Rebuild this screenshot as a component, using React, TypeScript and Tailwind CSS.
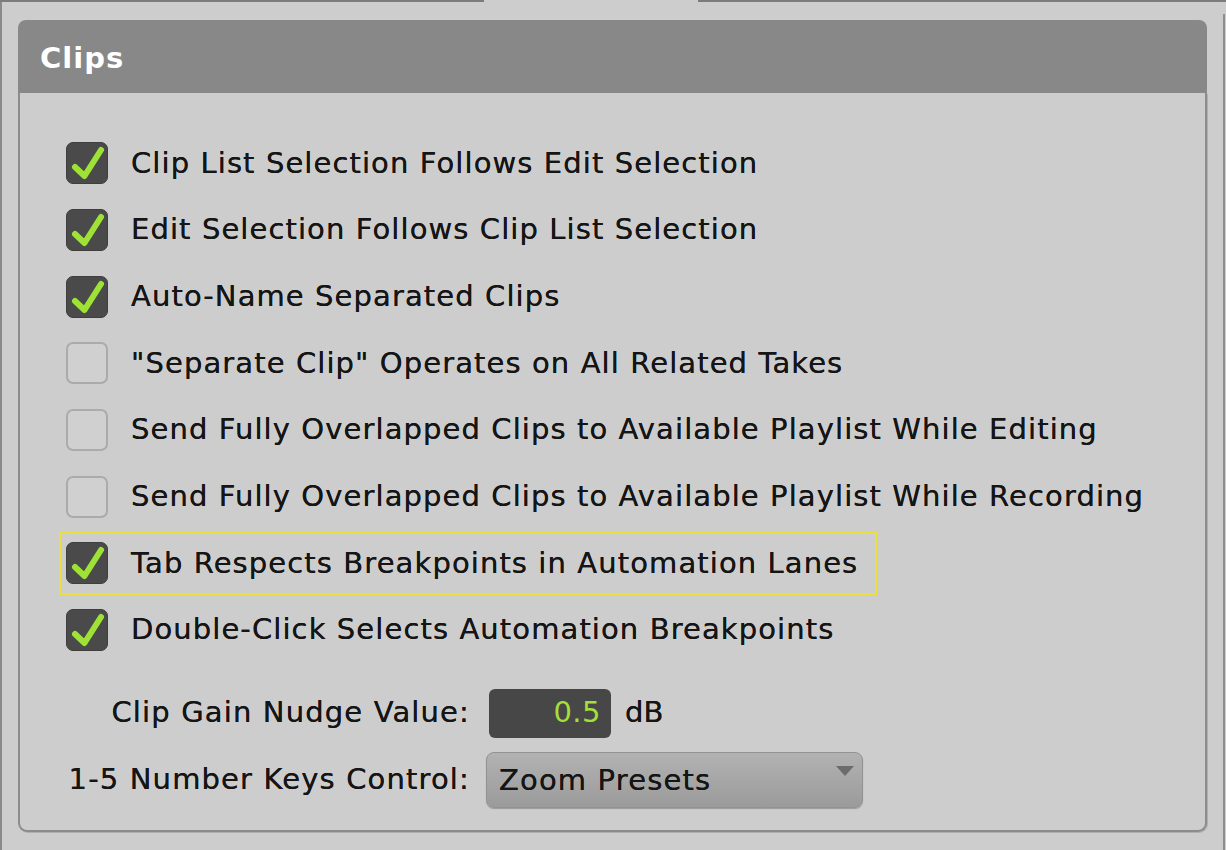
import React from "react";

const rows: { label: string; checked: boolean; highlight?: boolean }[] = [
  { label: "Clip List Selection Follows Edit Selection", checked: true },
  { label: "Edit Selection Follows Clip List Selection", checked: true },
  { label: "Auto-Name Separated Clips", checked: true },
  { label: "\"Separate Clip\" Operates on All Related Takes", checked: false },
  { label: "Send Fully Overlapped Clips to Available Playlist While Editing", checked: false },
  { label: "Send Fully Overlapped Clips to Available Playlist While Recording", checked: false },
  { label: "Tab Respects Breakpoints in Automation Lanes", checked: true, highlight: true },
  { label: "Double-Click Selects Automation Breakpoints", checked: true },
];

function Check({ checked }: { checked: boolean }) {
  if (!checked) {
    return <div className="w-[42px] h-[42px] shrink-0 rounded-[7px] border-2 border-[#ababab] bg-[#d0d0d0]" />;
  }
  return (
    <div className="w-[42px] h-[42px] shrink-0 rounded-[7px] bg-[#4a4a4a] border border-[#3e3e3e] relative">
      <svg className="absolute left-0 top-0" width="42" height="42" viewBox="0 0 42 42">
        <polyline
          points="8,24 17.5,33 34,7"
          fill="none"
          stroke="#9fe236"
          strokeWidth="6"
          strokeLinecap="round"
          strokeLinejoin="round"
        />
      </svg>
    </div>
  );
}

export default function App() {
  const font = { fontFamily: '"DejaVu Sans", "Liberation Sans", sans-serif' };
  return (
    <div className="w-[1226px] h-[850px] bg-[#cdcdcd] overflow-hidden flex flex-col" style={font}>
      <div className="flex h-[2px] shrink-0">
        <div className="w-[484px] bg-[#7c7c7c]" />
        <div className="w-[214px]" />
        <div className="flex-1 bg-[#7c7c7c]" />
      </div>
      <div className="flex flex-1">
        <div className="w-[2px] bg-[#8a8a8a] shrink-0" />
        <div className="pl-[16px] pt-[18px]">
          <div className="w-[1189px] h-[812px] flex flex-col">
            <div className="h-[73px] shrink-0 rounded-t-[8px] bg-[#888888] flex items-center pl-[22px] pt-[4px]">
              <span className="text-white font-bold text-[29px] tracking-[1px]">Clips</span>
            </div>
            <div className="flex-1 rounded-b-[9px] border-2 border-t-0 border-[#8c8c8c] bg-[#cdcdcd] shadow-[1px_1px_0_#b0b0b0] flex flex-col pt-[37px]">
              {rows.map((r, i) => (
                <div key={i} className="h-[66.7px] flex items-center pl-[39px]">
                  <div
                    className={
                      "h-[63px] flex items-center gap-[23px] pl-[5px] pr-[17px] border-2 " +
                      (r.highlight ? "border-[#e9df3f]" : "border-transparent")
                    }
                  >
                    <Check checked={r.checked} />
                    <span className="text-[29px] text-[#151515] tracking-[1.1px] whitespace-nowrap [text-shadow:0_0_0.3px_#151515]">{r.label}</span>
                  </div>
                </div>
              ))}
              <div className="grid grid-cols-[450px_auto] gap-x-[17px] items-center mt-[25px]">
                <div className="text-right text-[29px] text-[#151515] tracking-[1.15px] whitespace-nowrap h-[49px] flex items-center justify-end [text-shadow:0_0_0.3px_#151515]">
                  Clip Gain Nudge Value:
                </div>
                <div className="flex items-center gap-[14px] ml-[2px]">
                  <div className="w-[122px] h-[49px] rounded-[6px] bg-[#474747] flex items-center justify-end pr-[10px]">
                    <span className="text-[29px] text-[#a3de3a] tracking-[0.5px]">0.5</span>
                  </div>
                  <span className="text-[29px] text-[#151515] [text-shadow:0_0_0.3px_#151515]">dB</span>
                </div>
                <div className="text-right text-[29px] text-[#151515] tracking-[1.15px] whitespace-nowrap h-[56px] mt-[14px] flex items-center justify-end [text-shadow:0_0_0.3px_#151515]">
                  1-5 Number Keys Control:
                </div>
                <div className="mt-[14px] -ml-[1px]">
                  <div className="w-[377px] h-[56px] rounded-[8px] bg-gradient-to-b from-[#b2b2b2] to-[#9b9b9b] border border-[#929292] shadow-[0_1px_1px_rgba(0,0,0,0.25)] flex items-center pl-[12px] relative">
                    <span className="text-[29px] text-[#151515] tracking-[1.15px] pt-[2px] [text-shadow:0_0_0.3px_#151515]">Zoom Presets</span>
                    <svg className="absolute right-[8px] top-[13px]" width="18" height="11" viewBox="0 0 18 11">
                      <polygon points="0,0 18,0 9,10" fill="#6c6c6c" />
                    </svg>
                  </div>
                </div>
              </div>
            </div>
          </div>
        </div>
        <div className="w-[16px]" />
        <div className="mt-[12px] w-[2px] bg-[#8e8e8e]" />
      </div>
    </div>
  );
}
